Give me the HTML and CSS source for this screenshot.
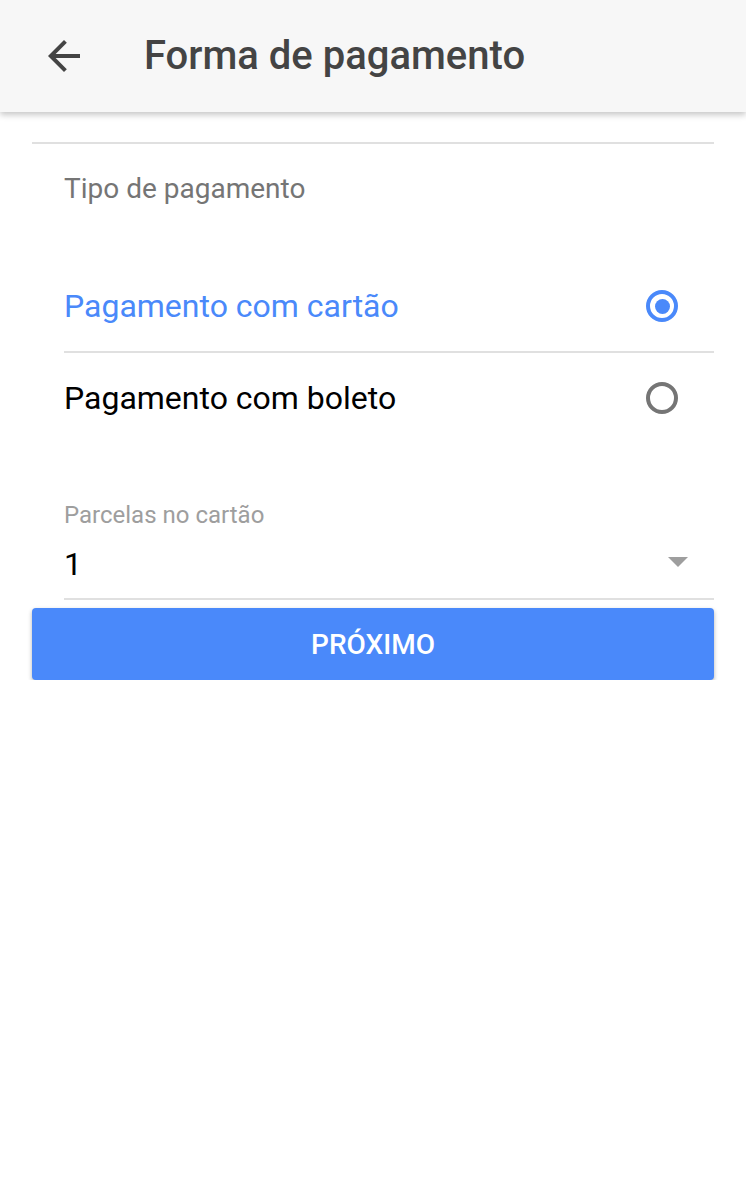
FILE: index.html
```html
<!DOCTYPE html>
<html lang="pt-BR">
<head>
<meta charset="utf-8">
<title>Forma de pagamento</title>
<link rel="stylesheet" href="styles.css">
</head>
<body>
<header class="toolbar">
  <button class="back" aria-label="Voltar">
    <svg width="48" height="48" viewBox="0 0 24 24"><path d="M20 11H7.83l5.59-5.59L12 4l-8 8 8 8 1.41-1.41L7.83 13H20v-2z" fill="#444444"/></svg>
  </button>
  <h1 class="title">Forma de pagamento</h1>
</header>
<main class="content">
  <hr class="divider">
  <div class="section-title">Tipo de pagamento</div>
  <div class="radio-group">
    <label class="radio-row checked">
      <span class="radio-text">Pagamento com cartão</span>
      <span class="radio"><span class="dot"></span></span>
    </label>
    <label class="radio-row">
      <span class="radio-text">Pagamento com boleto</span>
      <span class="radio"></span>
    </label>
  </div>
  <div class="field">
    <div class="field-label">Parcelas no cartão</div>
    <div class="select">
      <span class="select-value">1</span>
      <span class="caret"></span>
    </div>
  </div>
  <button class="primary">PRÓXIMO</button>
</main>
</body>
</html>
```
FILE: styles.css
```css
* { box-sizing: border-box; }
html, body { margin: 0; padding: 0; background: #ffffff; }
body { font-family: Roboto, "Noto Sans", "Liberation Sans", sans-serif; }

.toolbar {
  height: 112px;
  background: #f7f7f7;
  display: flex;
  align-items: center;
  padding-left: 40px;
  box-shadow: 0 3px 6px rgba(0,0,0,0.22);
  position: relative;
}
.back {
  width: 48px; height: 48px;
  padding: 0; margin: 0; border: 0; background: none;
  display: flex; align-items: center; justify-content: center;
}
.title {
  margin: 0 0 0 56px;
  font-size: 40px;
  line-height: 48px;
  font-weight: 500;
  color: #444444;
}

.content { padding: 0 32px; }
.divider {
  margin: 30px 0 0;
  border: 0;
  height: 2px;
  background: #e0e0e0;
}
.section-title {
  margin-top: 29px;
  padding-left: 32px;
  font-size: 28px;
  line-height: 32px;
  color: #757575;
}
.radio-group { margin-top: 56px; padding-left: 32px; }
.radio-row {
  height: 90px;
  display: flex;
  align-items: center;
  justify-content: space-between;
  padding-right: 36px;
  font-size: 32px;
  line-height: 40px;
  color: #000000;
}
.radio-row + .radio-row { border-top: 2px solid #e0e0e0; height: 92px; }
.radio-row.checked { color: #4a89fa; }
.radio {
  width: 32px; height: 32px;
  border: 4px solid #757575;
  border-radius: 50%;
  display: flex; align-items: center; justify-content: center;
}
.radio-row.checked .radio { border-color: #4a89fa; }
.dot { width: 15px; height: 15px; border-radius: 50%; background: #4a89fa; }

.field { margin-top: 58px; padding-left: 32px; }
.field-label { font-size: 24px; line-height: 28px; color: #9e9e9e; }
.select {
  margin-top: 15px;
  display: flex;
  align-items: center;
  justify-content: space-between;
  padding-bottom: 14px;
  border-bottom: 2px solid #e0e0e0;
  padding-right: 26px;
}
.select-value { font-size: 32px; line-height: 40px; color: #000000; }
.caret {
  width: 0; height: 0;
  margin-top: -4px;
  border-left: 10px solid transparent;
  border-right: 10px solid transparent;
  border-top: 10px solid #9e9e9e;
}
.primary {
  display: block;
  width: 100%;
  height: 72px;
  margin-top: 8px;
  border: 0;
  border-radius: 4px;
  background: #4a89fa;
  color: #ffffff;
  font-family: Roboto, "Noto Sans", sans-serif;
  font-size: 28px;
  font-weight: 500;
  box-shadow: 0 2px 4px rgba(0,0,0,0.3);
}
```
